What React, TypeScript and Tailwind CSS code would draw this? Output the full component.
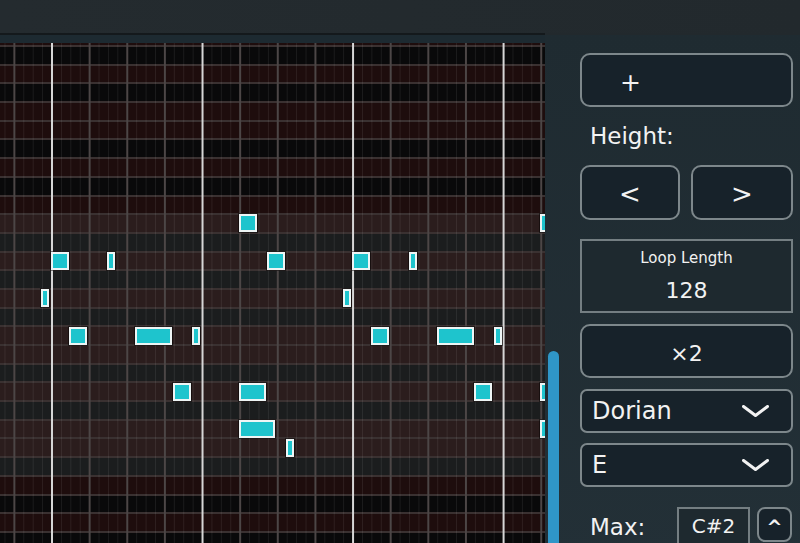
import React from 'react';

const ROW_H = 18.7;
const GRID_TOP = 43;
const FIRST_LINE = 47;
const BAR_X = 52;
const STEP = 9.408;

// top partial row first, then one entry per visible key
const keys = ['A', 'G#', 'G', 'F#', 'F', 'E', 'D#', 'D', 'C#', 'C', 'B', 'A#', 'A', 'G#', 'G', 'F#', 'F', 'E', 'D#', 'D', 'C#', 'C', 'B', 'A#', 'A', 'G#', 'G', 'F#'];

// [row, left x, right x]
const notes: [number, number, number][] = [
  [9, 239, 256], [9, 540, 552],
  [11, 51, 68], [11, 107, 114], [11, 267, 284], [11, 352, 369], [11, 409, 416],
  [13, 41, 48], [13, 343, 350],
  [15, 69, 86], [15, 135, 171], [15, 192, 199], [15, 371, 388], [15, 437, 473], [15, 494, 501],
  [18, 173, 190], [18, 239, 265], [18, 474, 491], [18, 540, 552],
  [20, 239, 274], [20, 540, 552],
  [21, 286, 293],
];

const rowClass = (idx: number, key: string) => {
  const black = key.includes('#');
  const light = idx >= 10 && idx <= 23;
  if (light) return black ? 'bg-[#1b1d1e]' : 'bg-[#2b1d1d]';
  return black ? 'bg-[#09090a]' : 'bg-[#1e0d0d]';
};

const GridLines = () => {
  const lines = [];
  for (let i = -6; i < 54; i++) {
    const x = BAR_X + STEP * i;
    if (x < 0 || x > 546) continue;
    if (i % 16 === 0) {
      lines.push(<line key={i} x1={x} x2={x} y1={0} y2={500} stroke="#d6d6d6" strokeWidth={2} />);
    } else if (i % 4 === 0) {
      lines.push(<line key={i} x1={x} x2={x} y1={0} y2={500} stroke="#4c4646" strokeWidth={2} />);
    } else {
      lines.push(<line key={i} x1={x} x2={x} y1={0} y2={500} stroke="rgba(255,255,255,0.08)" strokeWidth={1} />);
    }
  }
  return (
    <svg className="absolute inset-0" width={545} height={500}>
      {lines}
    </svg>
  );
};

const PianoRoll = () => (
  <div className="relative flex-1 overflow-hidden">
    <div className="flex flex-col">
      {keys.map((k, idx) => (
        <div
          key={idx}
          className={`${idx === 0 ? 'h-[4px]' : 'h-[18.7px]'} shrink-0 border-b-2 border-[#3a3131] ${rowClass(idx, k)}`}
        />
      ))}
    </div>
    <GridLines />
    {notes.map(([row, x1, x2], i) => (
      <div
        key={i}
        className="absolute h-[18px] border-2 border-[#eef5f5] bg-[#1ec4cd] shadow-[0_0_0_1px_rgba(0,0,0,0.45)]"
        style={{ left: x1, width: x2 - x1 + 1, top: FIRST_LINE + ROW_H * row - 1 - GRID_TOP }}
      />
    ))}
  </div>
);

const Chevron = () => (
  <svg width="27" height="12" viewBox="0 0 27 12">
    <polyline points="1.5,1.5 13.5,10.5 25.5,1.5" fill="none" stroke="#f2f2f2" strokeWidth="3" strokeLinecap="round" strokeLinejoin="round" />
  </svg>
);

const btn = 'border-2 border-[#7d878b] bg-[#17222a] text-[#f2f2f2]';

const App: React.FC = () => {
  return (
    <div className="flex h-[543px] w-[800px] flex-col overflow-hidden bg-[#232a2e] font-['DejaVu_Sans',sans-serif]">
      {/* Top bar */}
      <div className="h-[33px] shrink-0 bg-gradient-to-r from-[#242b2f] to-[#22292d]" />

      <div className="flex flex-1">
        {/* Piano roll */}
        <div className="flex w-[545px] flex-col">
          <div className="h-[2px] bg-[#14191c]" />
          <div className="h-[8px] bg-[#1d2a31]" />
          <PianoRoll />
        </div>

        {/* Side panel */}
        <div className="flex w-[255px] flex-col bg-gradient-to-b from-[#1f2b31] to-[#233037]">
          <div className="h-[2px] bg-[#22292d]" />
          <div className="flex flex-1">
            <div className="w-[35px] pl-[3px] pt-[316px]">
              <div className="h-[220px] w-[11px] rounded-t-full bg-[#2f96c8]" />
            </div>

            <div className="flex w-[213px] flex-col pt-[18px]">
              <button className={`${btn} flex h-[54px] items-center rounded-[10px] pl-[38px] pt-[5px] text-[25px]`}>
                +
              </button>

              <div className="mt-[16px] h-[27px] pl-[10px] text-[23px] leading-[27px] text-[#f2f2f2]">Height:</div>

              <div className="mt-[15px] flex gap-[11px]">
                <button className={`${btn} flex h-[55px] w-[100px] items-center justify-center rounded-[10px] pt-[4px] text-[26px]`}>
                  &lt;
                </button>
                <button className={`${btn} flex h-[55px] w-[102px] items-center justify-center rounded-[10px] pt-[4px] text-[26px]`}>
                  &gt;
                </button>
              </div>

              <div className="mt-[19px] flex h-[74px] flex-col items-center border-2 border-[#747e82] bg-[#1e292f] text-[#f2f2f2]">
                <div className="mt-[7px] text-[15px] leading-[20px]">Loop Length</div>
                <div className="mt-[9px] text-[22px] leading-[28px]">128</div>
              </div>

              <button className={`${btn} mt-[11px] flex h-[54px] items-center justify-center rounded-[10px] pt-[4px] text-[22px]`}>
                ×2
              </button>

              <div className={`${btn} mt-[11px] flex h-[44px] items-center justify-between rounded-[7px] pl-[10px] pr-[22px]`}>
                <span className="text-[24px] leading-[28px]">Dorian</span>
                <Chevron />
              </div>

              <div className={`${btn} mt-[10px] flex h-[44px] items-center justify-between rounded-[7px] pl-[10px] pr-[22px]`}>
                <span className="text-[24px] leading-[28px]">E</span>
                <Chevron />
              </div>

              <div className="mt-[20px] flex items-start">
                <div className="w-[97px] pl-[10px] pt-[6px] text-[23px] leading-[28px] text-[#f2f2f2]">Max:</div>
                <div className="flex h-[40px] w-[73px] items-start justify-center border-2 border-[#747e82] bg-[#1e292f] pt-[5px] text-[20px] leading-[24px] text-[#f2f2f2]">
                  C#2
                </div>
                <button className={`${btn} ml-[7px] flex h-[35px] w-[35px] items-center justify-center rounded-[8px] pt-[6px] text-[19px] font-bold`}>
                  ^
                </button>
              </div>
            </div>
          </div>
        </div>
      </div>
    </div>
  );
};

export default App;
